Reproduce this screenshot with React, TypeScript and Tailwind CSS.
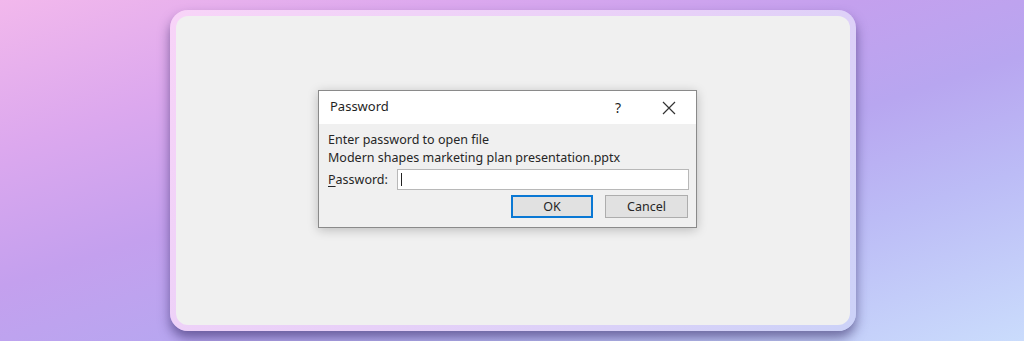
import React from "react";

export default function App() {
  return (
    <div className="w-[1024px] h-[341px] overflow-hidden bg-[linear-gradient(to_bottom_right,#f2b8ec_0%,#dca8ee_22%,#c4a0ee_42%,#b8a6f0_58%,#bcbcf6_75%,#cadcfc_100%)] pt-[10px] pl-[170px] font-['Noto_Sans',sans-serif]">
      <div className="w-[686px] h-[321px] rounded-[18px] p-[6px] bg-[linear-gradient(135deg,#f8d4f8,#e8d0f8_50%,#ccd2f8)] shadow-[0_7px_12px_rgba(40,30,90,0.55)]">
        <div className="w-full h-full rounded-[12px] bg-[#f0f0f0] pl-[142px] pt-[74px]">
          <div className="w-[379px] h-[138px] bg-[#f0f0f0] border border-[#8a8a8a] shadow-[0_2px_10px_rgba(0,0,0,0.22)] flex flex-col">
            <div className="h-[33px] bg-white flex items-center pl-[11px] text-[13px] text-[#1f1f1f]">
              <span className="flex-1 -mt-[1px]">Password</span>
              <span className="w-[20px] text-center mr-[34px] text-[14px] -mt-[1px]">?</span>
              <svg width="14" height="14" viewBox="0 0 14 14" className="mr-[20px]">
                <path d="M1 1 L13 13 M13 1 L1 13" stroke="#333" strokeWidth="1.2" />
              </svg>
            </div>
            <div className="pl-[9px] pt-[7px] text-[12.5px] leading-[18px] text-[#262626]">
              <div>Enter password to open file</div>
              <div>Modern shapes marketing plan presentation.pptx</div>
              <div className="flex items-center mt-[2px]">
                <span className="w-[69px]">
                  <span className="underline underline-offset-2">P</span>assword:
                </span>
                <div className="w-[292px] h-[21px] bg-white border border-[#b8b8b8] flex items-center pl-[3px]">
                  <div className="w-[1px] h-[13px] bg-[#222]" />
                </div>
              </div>
              <div className="flex justify-end gap-[12px] mr-[8px] mt-[5px]">
                <button className="w-[82px] h-[23px] bg-[#e1e1e1] border-2 border-[#0a78d4] text-[12.5px] text-[#262626] flex items-center justify-center">
                  OK
                </button>
                <button className="w-[83px] h-[23px] bg-[#e1e1e1] border border-[#adadad] text-[12.5px] text-[#262626] flex items-center justify-center">
                  Cancel
                </button>
              </div>
            </div>
          </div>
        </div>
      </div>
    </div>
  );
}
